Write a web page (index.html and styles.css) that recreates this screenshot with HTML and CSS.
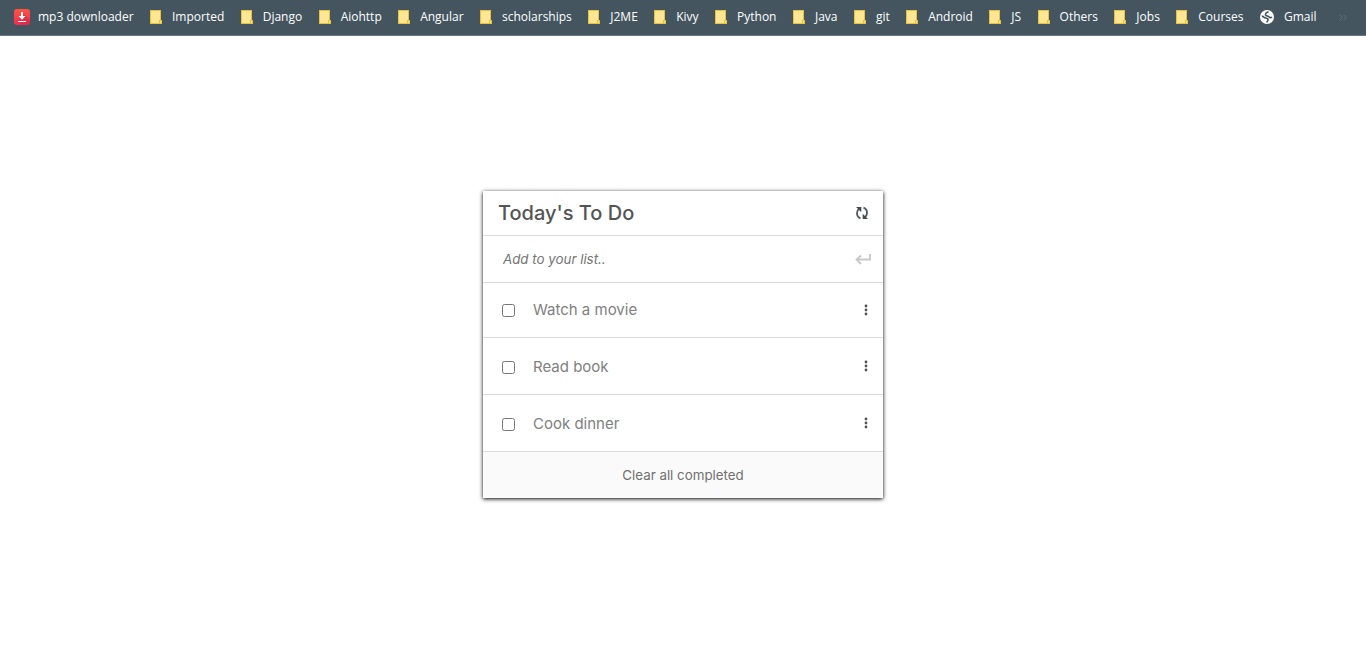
FILE: index.html
```html
<!DOCTYPE html>
<html lang="en">
<head>
  <meta charset="utf-8">
  <title>Today's To Do</title>
  <link rel="stylesheet" href="styles.css">
</head>
<body>
  <svg class="sprite" aria-hidden="true">
    <symbol id="folder" viewBox="0 0 12 14">
      <path d="M0 0h11v10h1v4H0z" fill="#e9c23d"/>
      <path d="M1 1h9v9H9v3H1z" fill="#ffe694"/>
      <path d="M10 11h1v2h-1z" fill="#ffe694"/>
    </symbol>
    <symbol id="dots" viewBox="0 0 4 12">
      <circle cx="2" cy="2" r="1.400"/><circle cx="2" cy="6" r="1.400"/><circle cx="2" cy="10" r="1.400"/>
    </symbol>
  </svg>

  <nav class="bookmarks" aria-label="Bookmarks">
    <a class="bookmark bookmark-site" href="#"><svg class="site-icon" viewBox="0 0 16 16"><defs><linearGradient id="red" x2="0" y2="1"><stop stop-color="#ff5440"/><stop offset="1" stop-color="#f52b53"/></linearGradient></defs><rect width="16" height="16" rx="3" fill="url(#red)"/><path d="M10 5l6 6v2a3 3 0 0 1-3 3H8l-4-4z" fill="#c92544" opacity=".5"/><path d="M7 3h2v4h2.500L8 10.800 4.500 7H7zM4 12h8v1H4z" fill="#fff"/></svg>mp3 downloader</a>
    <a class="bookmark" href="#"><svg class="folder"><use href="#folder"/></svg>Imported</a>
    <a class="bookmark" href="#"><svg class="folder"><use href="#folder"/></svg>Django</a>
    <a class="bookmark" href="#"><svg class="folder"><use href="#folder"/></svg>Aiohttp</a>
    <a class="bookmark" href="#"><svg class="folder"><use href="#folder"/></svg>Angular</a>
    <a class="bookmark" href="#"><svg class="folder"><use href="#folder"/></svg>scholarships</a>
    <a class="bookmark" href="#"><svg class="folder"><use href="#folder"/></svg>J2ME</a>
    <a class="bookmark" href="#"><svg class="folder"><use href="#folder"/></svg>Kivy</a>
    <a class="bookmark" href="#"><svg class="folder"><use href="#folder"/></svg>Python</a>
    <a class="bookmark" href="#"><svg class="folder"><use href="#folder"/></svg>Java</a>
    <a class="bookmark" href="#"><svg class="folder"><use href="#folder"/></svg>git</a>
    <a class="bookmark" href="#"><svg class="folder"><use href="#folder"/></svg>Android</a>
    <a class="bookmark" href="#"><svg class="folder"><use href="#folder"/></svg>JS</a>
    <a class="bookmark" href="#"><svg class="folder"><use href="#folder"/></svg>Others</a>
    <a class="bookmark" href="#"><svg class="folder"><use href="#folder"/></svg>Jobs</a>
    <a class="bookmark" href="#"><svg class="folder"><use href="#folder"/></svg>Courses</a>
    <a class="bookmark" href="#"><svg class="globe-icon" viewBox="0 0 14 14"><circle cx="7" cy="7" r="7" fill="#fff"/><path d="M8.500 1.800C6.500 2.500 5.200 3.600 5.500 5c.4 1.200 2.700.8 3.600 1.900 1 1.300 1.600.6 3.100.4M6.500 12.300c1.300-1.200 2-2.300 1.200-3.500C6.800 7.600 5 8.400 4 7.200 3.300 6.300 2.500 6.300 1.800 6.400" fill="none" stroke="#44555f" stroke-width="1.600"/></svg>Gmail</a>
    <button class="more" type="button" aria-label="More bookmarks"><svg viewBox="0 0 8 7"><path d="M.8.800L3.500 3.500.8 6.200M4.500.800L7.200 3.500 4.500 6.200"/></svg></button>
  </nav>

  <main class="page">
    <section class="card">
      <header class="row head">
        <h1 class="title">Today's To Do</h1>
        <button class="icon-button" type="button" aria-label="Refresh"><svg class="refresh" viewBox="0 0 14 14"><path d="M5.500 12.300C3 11.300 1.900 9.400 2 7c0-1.800.7-3.200 2.200-4.300M8.500 1.700c2.500 1 3.600 2.900 3.500 5.300 0 1.800-.7 3.200-2.200 4.300" fill="none" stroke="#545862" stroke-width="1.800"/><path d="M1 1h5.300v5.200zM13 13H7.700V7.800z" fill="#454852"/></svg></button>
      </header>
      <form class="row add">
        <input class="add-input" type="text" placeholder="Add to your list.." aria-label="Add to your list">
        <button class="icon-button" type="button" aria-label="Add"><svg class="enter" viewBox="0 0 16 12"><path d="M15 1v5.500H1.500M6 2.500L1.500 6.500 6 11"/></svg></button>
      </form>
      <ul class="list">
        <li class="row item"><label class="task"><input class="check" type="checkbox">Watch a movie</label><button class="icon-button" type="button" aria-label="Options"><svg class="dots"><use href="#dots"/></svg></button></li>
        <li class="row item"><label class="task"><input class="check" type="checkbox">Read book</label><button class="icon-button" type="button" aria-label="Options"><svg class="dots"><use href="#dots"/></svg></button></li>
        <li class="row item"><label class="task"><input class="check" type="checkbox">Cook dinner</label><button class="icon-button" type="button" aria-label="Options"><svg class="dots"><use href="#dots"/></svg></button></li>
      </ul>
      <button class="clear" type="button">Clear all completed</button>
    </section>
  </main>
</body>
</html>
```
FILE: styles.css
```css
* {
  box-sizing: border-box;
}

body {
  margin: 0;
  background: #fff;
  font-family: Inter, "Liberation Sans", sans-serif;
}

button {
  border: 0;
  padding: 0;
  background: none;
  font-family: inherit;
}

svg {
  display: block;
  flex: none;
}

.sprite {
  position: absolute;
  width: 0;
  height: 0;
}

.bookmarks {
  display: flex;
  align-items: center;
  justify-content: space-between;
  padding: 0 19px 1px 14px;
  min-height: 36px;
  background: #44555f;
  border-bottom: 1px solid #6b7880;
  font-family: "Open Sans", "Noto Sans", sans-serif;
  font-size: 12px;
  line-height: 16px;
}

.bookmark {
  display: flex;
  align-items: center;
  gap: 10px;
  color: #fff;
  text-decoration: none;
  white-space: nowrap;
}

.bookmark-site {
  gap: 8px;
}

.site-icon {
  width: 16px;
  height: 16px;
}

.globe-icon {
  width: 14px;
  height: 14px;
}

.folder {
  width: 12px;
  height: 14px;
}

.more {
  margin-left: 6px;
}

.more svg {
  width: 8px;
  height: 7px;
  fill: none;
  stroke: #66717a;
}

.page {
  display: flex;
  justify-content: center;
  padding: 155px 16px 40px;
}

.card {
  width: 400px;
  box-shadow: 0 1px 4px #000;
}

.row {
  display: flex;
  align-items: center;
  justify-content: space-between;
  border-bottom: 1px solid #dcdcdc;
}

.head {
  min-height: 45px;
  padding: 0 14px 0 15px;
}

.title {
  margin: 0;
  color: #545454;
  font-size: 20px;
  font-weight: 500;
  line-height: 24px;
}

.refresh {
  width: 14px;
  height: 14px;
}

.add {
  min-height: 47px;
  padding: 0 12px 0 20px;
}

.add-input {
  flex: 1;
  min-width: 0;
  border: 0;
  padding: 0;
  outline: 0;
  background: none;
  font-family: inherit;
  font-style: italic;
}

.add-input::placeholder {
  color: #757575;
}

.enter {
  width: 16px;
  height: 12px;
  fill: none;
  stroke: #c8c8c8;
  stroke-width: 1.8;
}

.list {
  margin: 0;
  padding: 0;
  list-style: none;
}

.item {
  min-height: 57px;
  padding: 0 15px 0 19px;
}

.item:first-child {
  min-height: 55px;
}

.task {
  display: flex;
  align-items: center;
  gap: 18px;
  color: #808080;
  font-size: 15px;
  line-height: 20px;
}

.item + .item .task {
  padding-top: 2px;
}

.check {
  width: 13px;
  height: 13px;
  margin: 0;
}

.dots {
  width: 4px;
  height: 12px;
  fill: #545454;
}

.clear {
  display: block;
  width: 100%;
  min-height: 46px;
  background: #fafafa;
  color: #707070;
}
```
